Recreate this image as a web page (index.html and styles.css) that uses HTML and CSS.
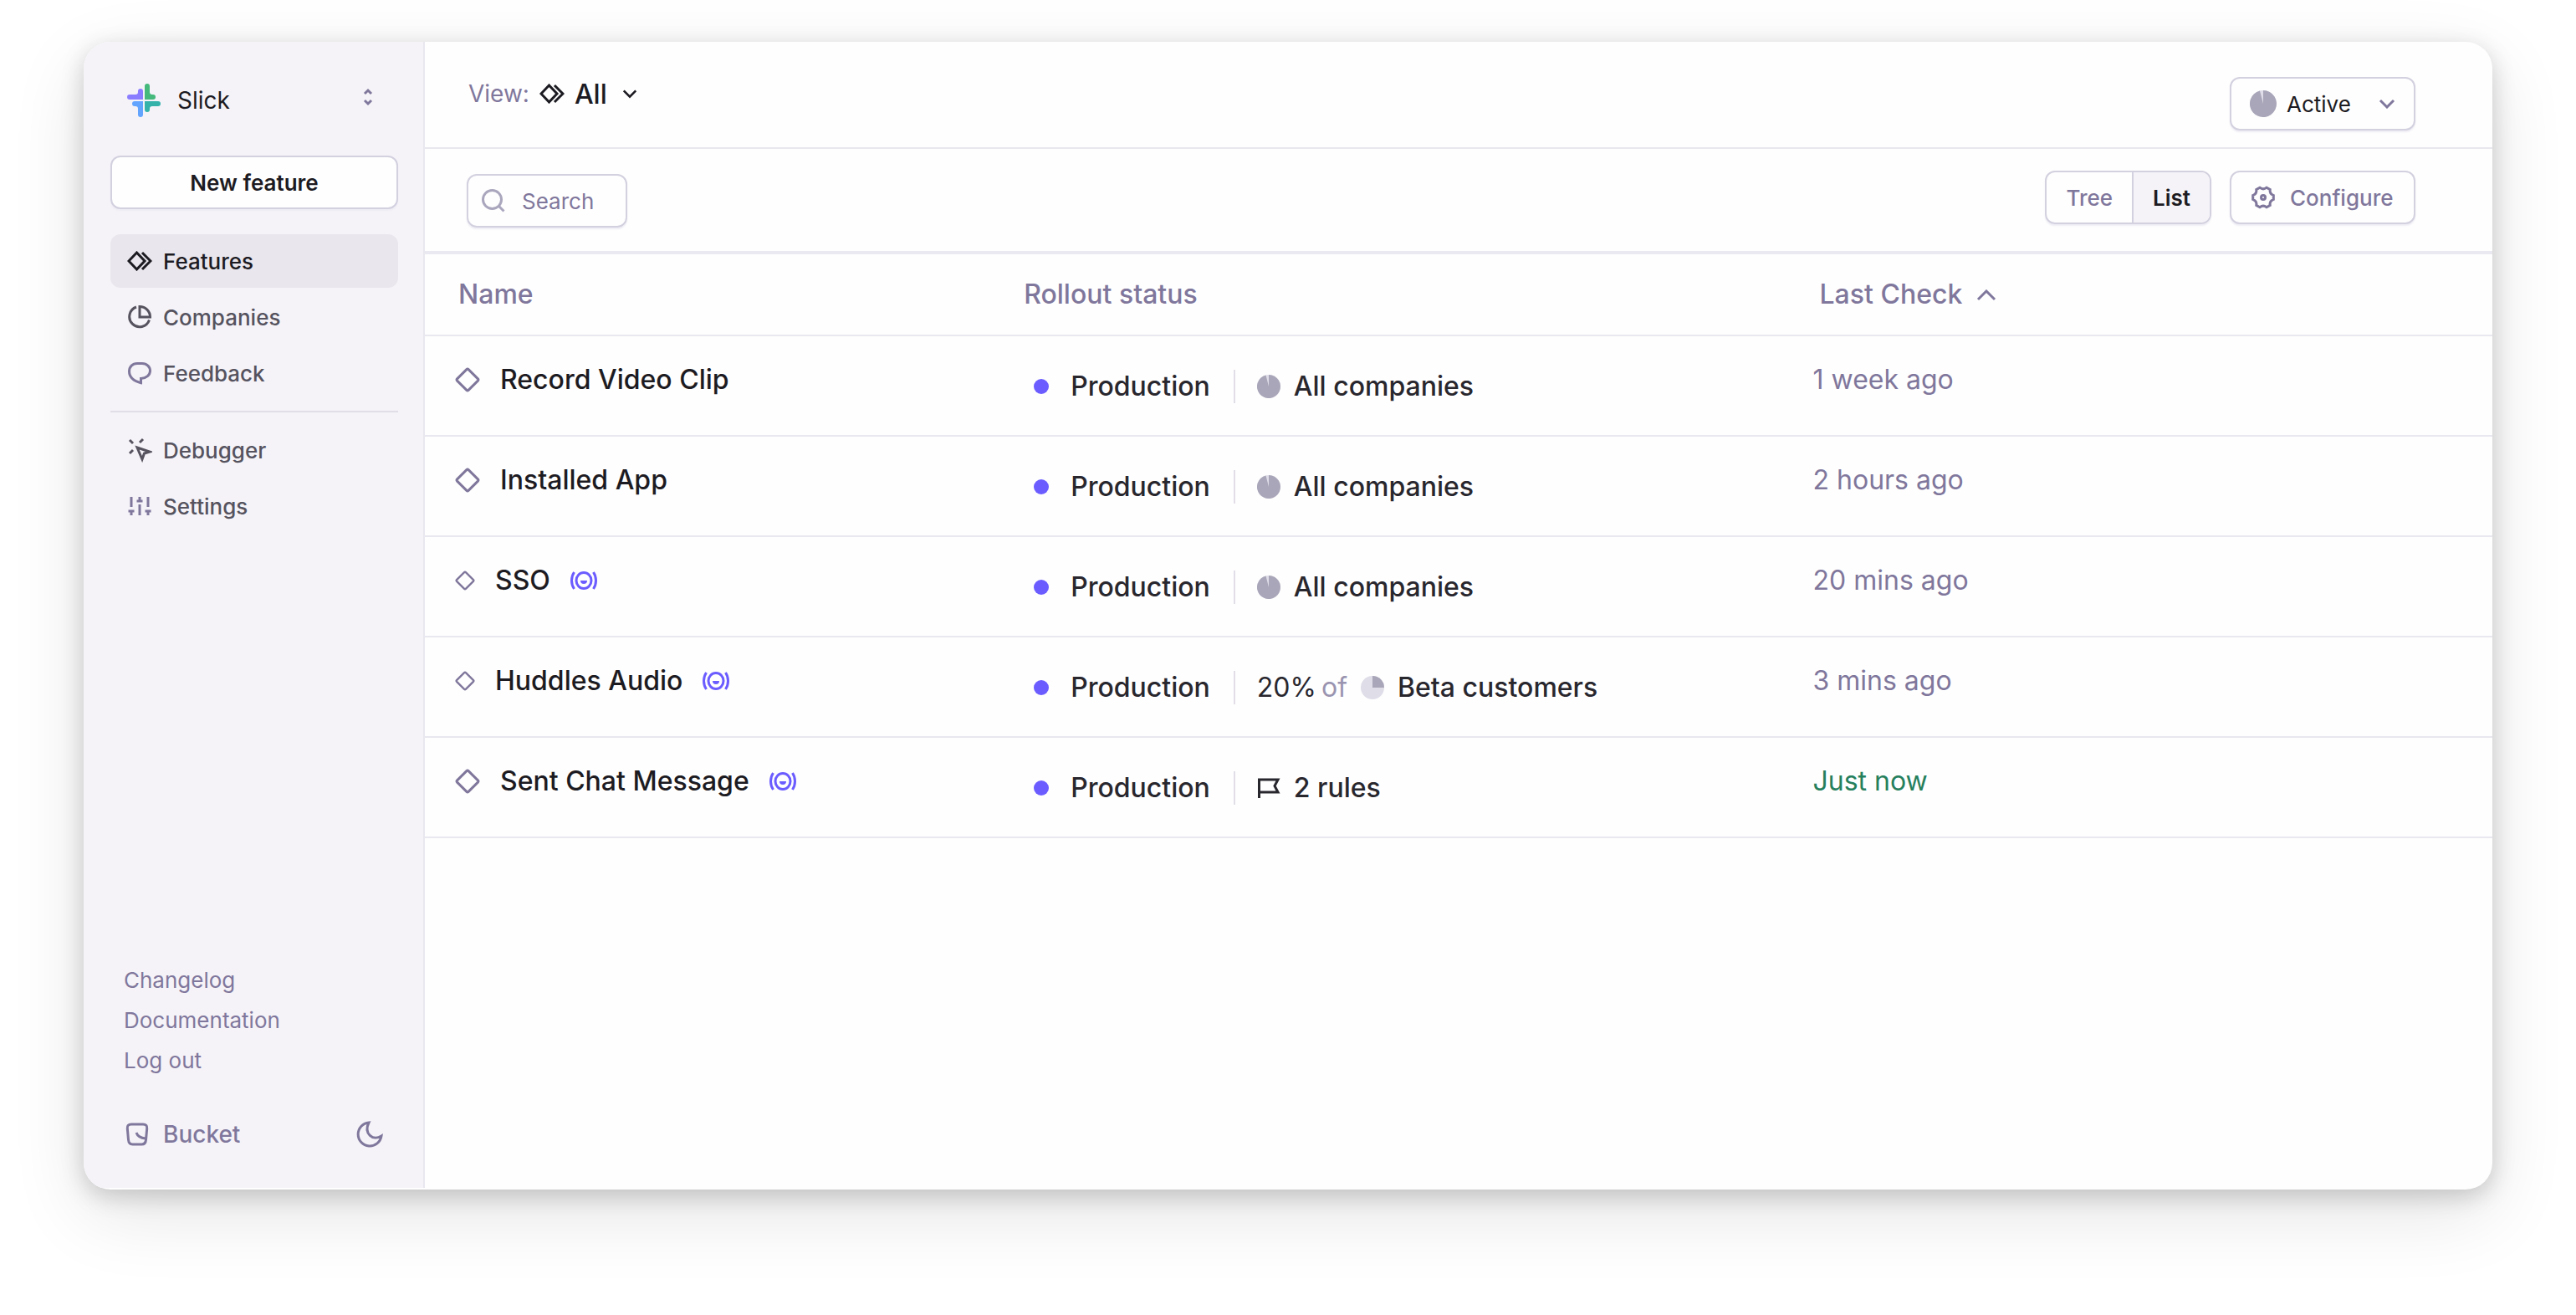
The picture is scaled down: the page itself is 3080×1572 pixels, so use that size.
FILE: index.html
```html
<!DOCTYPE html>
<html lang="en">
<head>
<meta charset="utf-8">
<title>Features</title>
<link rel="stylesheet" href="styles.css">
</head>

<body>
<svg class="sprite" width="0" height="0" aria-hidden="true">
	<symbol id="i-features" viewBox="0 0 30 24"><path d="M11.500 2 21 12l-9.500 10L2 12z"/><path d="M18 2l10 10-10 10"/></symbol>
	<symbol id="i-diamond" viewBox="0 0 30 30"><path d="M13.900 2.600 2.600 13.900a1.600 1.600 0 0 0 0 2.200l11.300 11.300a1.600 1.600 0 0 0 2.200 0l11.300-11.300a1.600 1.600 0 0 0 0-2.200L16.100 2.600a1.600 1.600 0 0 0-2.200 0z"/></symbol>
	<symbol id="i-live" viewBox="0 0 32 24"><ellipse cx="16" cy="12" rx="9" ry="9.500"/><path d="M4.500 2c-4 6-4 14 0 20M27.500 2c4 6 4 14 0 20"/><path class="solid" d="M12 12h8a4 4 0 0 1-8 0z"/></symbol>
	<symbol id="i-pie" viewBox="0 0 32 32"><circle class="pie-back" cx="16" cy="16" r="16"/><path class="pie-fill" d="M16 16V0A16 16 0 1 1 12 .5z"/></symbol>
	<symbol id="i-pie-quarter" viewBox="0 0 32 32"><circle class="pie-back" cx="16" cy="16" r="16"/><path class="pie-fill" d="M16 16V0a16 16 0 0 1 16 16z"/></symbol>
	<symbol id="i-down" viewBox="0 0 20 12"><path d="m2 2 8 8 8-8"/></symbol>
</svg>

<div class="window">
	<aside class="sidebar">
		<button class="workspace" type="button">
			<svg class="logo" viewBox="0 0 40 40">
				<path fill="#8b7dff" d="M13 9a3 3 0 0 1 6 0v10H3a3 3 0 0 1 0-6h7a3 3 0 0 0 3-3z"/>
				<path fill="#45b97c" d="M21 3a3 3 0 0 1 6 0v7a3 3 0 0 0 3 3h1a3 3 0 0 1 0 6H21z"/>
				<path fill="#63a4ff" d="M9 21h10v16a3 3 0 0 1-6 0v-7a3 3 0 0 0-3-3H9a3 3 0 0 1 0-6z"/>
				<path fill="#35b3ab" d="M21 21h16a3 3 0 0 1 0 6h-7a3 3 0 0 0-3 3v1a3 3 0 0 1-6 0z"/>
			</svg>
			<span>Slick</span>
			<svg class="icon updown" viewBox="0 0 12 32"><path d="m2 12 4-4 4 4M2 20l4 4 4-4"/></svg>
		</button>
		<button class="btn new-feature" type="button">New feature</button>
		<nav class="nav">
			<a class="active" href="#"><svg class="icon" width="30" height="24"><use href="#i-features"/></svg>Features</a>
			<a href="#"><svg class="icon" width="30" height="30" viewBox="0 0 30 30"><path d="M11 3a12.200 12.200 0 1 0 15.500 15.500"/><path d="M15 2.500V15h12.500A12.500 12.500 0 0 0 15 2.500z"/></svg>Companies</a>
			<a href="#"><svg class="icon muted" width="30" height="30" viewBox="0 0 30 30"><path d="M12 3.500h6c5.500 0 9.500 4 9.500 8.800 0 5-4.500 9-11 9.200v5.200C7.500 24.500 2.500 19.500 2.500 12.800c0-5.300 4-9.300 9.500-9.300z"/></svg>Feedback</a>
			<hr>
			<a href="#"><svg class="icon" width="30" height="30" viewBox="0 0 30 30"><path d="m3 3 4 4M19 2l-4 4M7 15l-4 4M12 12l15 5-6.500 2L18 26z"/></svg>Debugger</a>
			<a href="#"><svg class="icon muted" width="30" height="26" viewBox="0 0 30 26"><path d="M5 2v12M5 18v6M1.500 19h7M15 2v4M11.500 7h7M15 11v13M25 2v12M25 18v6M21.500 19h7"/></svg>Settings</a>
		</nav>
		<div class="links">
			<a href="#">Changelog</a>
			<a href="#">Documentation</a>
			<a href="#">Log out</a>
		</div>
		<div class="brand">
			<svg class="icon" width="28" height="28" viewBox="0 0 28 28"><path d="M7 2h14c3.500 0 5 1.800 4.700 5l-1.200 13.500c-.3 3.800-1.700 5.500-5 5.500h-11c-3.300 0-4.700-1.700-5-5.500L2.300 7C2 3.800 3.500 2 7 2z"/><path d="M13 12c1.500 4.500 5.500 6.500 11 7"/></svg>
			<span>Bucket</span>
			<button class="theme" type="button" aria-label="Dark mode"><svg class="icon" width="32" height="32" viewBox="0 0 32 32"><path d="M15 2A14 14 0 1 0 30 18C20 24.500 8.500 15 15 2z"/></svg></button>
		</div>
	</aside>

	<main class="main">
		<header class="topbar">
			<button class="view" type="button">
				<span class="label">View:</span>
				<svg class="icon" width="30" height="24"><use href="#i-features"/></svg>
				<span class="value">All</span>
				<svg class="icon" width="18" height="12"><use href="#i-down"/></svg>
			</button>
			<button class="btn status" type="button">
				<svg width="32" height="32"><use href="#i-pie"/></svg>
				<span>Active</span>
				<svg class="icon muted" width="20" height="12"><use href="#i-down"/></svg>
			</button>
		</header>
		<div class="toolbar">
			<label class="search">
				<svg class="icon" width="28" height="28" viewBox="0 0 28 28"><circle cx="12.500" cy="12.500" r="11"/><path d="m20.500 20.500 6 6"/></svg>
				<input type="text" placeholder="Search" aria-label="Search">
			</label>
			<div class="tabs">
				<button type="button">Tree</button>
				<button class="selected" type="button">List</button>
			</div>
			<button class="btn configure" type="button">
				<svg class="icon" width="28" height="28" viewBox="0 0 28 28"><path d="M26.300 16.400Q21.400 18.300 22.200 23.400L18.100 25.800Q14 22.500 9.900 25.800L5.800 23.400Q6.600 18.300 1.700 16.400V11.600Q6.600 9.700 5.800 4.600L9.900 2.200Q14 5.500 18.100 2.200L22.200 4.600Q21.400 9.700 26.300 11.600z"/><circle cx="14" cy="14" r="2.500"/></svg>
				Configure
			</button>
		</div>
		<table class="features">
			<colgroup><col class="c-name"><col class="c-rollout"><col></colgroup>
			<thead>
				<tr>
					<th>Name</th>
					<th>Rollout status</th>
					<th>Last Check <svg class="icon sort" width="24" height="16" viewBox="0 0 24 16"><path d="m2 12 10-10 10 10"/></svg></th>
				</tr>
			</thead>
			<tbody>
				<tr>
					<td><div class="name"><svg class="icon" width="30" height="30"><use href="#i-diamond"/></svg>Record Video Clip</div></td>
					<td><div class="rollout"><i class="dot"></i>Production<div class="rule"><svg width="28" height="28"><use href="#i-pie"/></svg>All companies</div></div></td>
					<td>1 week ago</td>
				</tr>
				<tr>
					<td><div class="name"><svg class="icon" width="30" height="30"><use href="#i-diamond"/></svg>Installed App</div></td>
					<td><div class="rollout"><i class="dot"></i>Production<div class="rule"><svg width="28" height="28"><use href="#i-pie"/></svg>All companies</div></div></td>
					<td>2 hours ago</td>
				</tr>
				<tr>
					<td><div class="name"><svg class="icon" width="24" height="24"><use href="#i-diamond"/></svg>SSO<svg class="icon live" width="32" height="24"><use href="#i-live"/></svg></div></td>
					<td><div class="rollout"><i class="dot"></i>Production<div class="rule"><svg width="28" height="28"><use href="#i-pie"/></svg>All companies</div></div></td>
					<td>20 mins ago</td>
				</tr>
				<tr>
					<td><div class="name"><svg class="icon" width="24" height="24"><use href="#i-diamond"/></svg>Huddles Audio<svg class="icon live" width="32" height="24"><use href="#i-live"/></svg></div></td>
					<td><div class="rollout"><i class="dot"></i>Production<div class="rule"><span class="share">20% <em>of</em></span><svg width="28" height="28"><use href="#i-pie-quarter"/></svg>Beta customers</div></div></td>
					<td>3 mins ago</td>
				</tr>
				<tr>
					<td><div class="name"><svg class="icon" width="30" height="30"><use href="#i-diamond"/></svg>Sent Chat Message<svg class="icon live" width="32" height="24"><use href="#i-live"/></svg></div></td>
					<td><div class="rollout"><i class="dot"></i>Production<div class="rule"><svg class="icon" width="28" height="28" viewBox="0 0 28 28"><path d="M2.500 26V4H25l-4 7.500 4 7.500H3"/></svg>2 rules</div></div></td>
					<td class="now">Just now</td>
				</tr>
			</tbody>
		</table>
	</main>
</div>
</body>
</html>
```

FILE: styles.css
```css
*{
	box-sizing:border-box;
}
body{
	margin:0;
	padding:50px 100px 150px;
	min-height:100vh;
	display:flex;
	background:#fff;
	color:#1d1b22;
	font-family:Inter, "Liberation Sans", sans-serif;
	font-size:26px;
}
a{
	color:inherit;
	text-decoration:none;
}
button, input{
	font:inherit;
	color:inherit;
	background:none;
	border:0;
	padding:0;
	margin:0;
}
svg{
	flex:none;
	display:block;
}
.sprite{
	position:absolute;
}
.icon{
	fill:none;
	stroke:currentColor;
	stroke-width:3px;
}
.muted{
	color:#80779c;
}
.solid{
	fill:currentColor;
	stroke:none;
}
.pie-back{
	fill:#dfdde8;
}
.pie-fill{
	fill:#aaa6b9;
}
.window{
	flex:1;
	display:flex;
	overflow:hidden;
	padding-bottom:2px;
	border-radius:32px;
	background:#fefefe;
	box-shadow:0 8px 28px rgba(0,0,0,.18), 0 28px 90px rgba(0,0,0,.11);
}

/* sidebar */
.sidebar{
	flex:none;
	width:408px;
	display:flex;
	flex-direction:column;
	padding:50px 30px 44px 32px;
	border-right:2px solid #e9e7ef;
	background:#f5f3f8;
}
.workspace{
	display:flex;
	align-items:center;
	gap:20px;
	height:40px;
	padding:0 30px 0 20px;
	font-size:28px;
}
.logo{
	width:40px;
	height:40px;
}
.updown{
	align-self:flex-start;
	width:12px;
	height:32px;
	margin-left:auto;
	color:#80779c;
}
.btn{
	display:flex;
	align-items:center;
	height:64px;
	border:2px solid #d3d0df;
	border-radius:12px;
	background:#fefefe;
	box-shadow:0 2px 2px #eeecf4;
}
.new-feature{
	justify-content:center;
	margin:46px 0 30px;
	font-weight:600;
}
.nav{
	display:flex;
	flex-direction:column;
	gap:3px;
}
.nav a{
	display:flex;
	align-items:center;
	gap:13px;
	height:64px;
	padding-left:20px;
	border-radius:12px;
	color:#56535f;
	font-weight:500;
}
.nav .active{
	background:#e9e6ed;
	color:#1d1b22;
}
.nav hr{
	width:100%;
	height:2px;
	margin:10px 0;
	border:0;
	background:#e1dee8;
}
.links{
	display:flex;
	flex-direction:column;
	margin-top:auto;
	padding-left:16px;
	color:#80779c;
	line-height:48px;
}
.brand{
	display:flex;
	align-items:center;
	gap:17px;
	height:40px;
	margin-top:44px;
	padding:0 18px;
	color:#80779c;
	font-size:28px;
	font-weight:500;
}
.theme{
	margin-left:auto;
}

/* top bars */
.main{
	flex:1;
	min-width:0;
}
.topbar{
	display:flex;
	align-items:flex-start;
	justify-content:space-between;
	height:128px;
	padding:42px 92px 0 52px;
	border-bottom:2px solid #e9e7ef;
}
.view{
	display:flex;
	align-items:center;
	height:40px;
	font-size:28px;
}
.view .label{
	margin-right:12px;
	color:#80779c;
}
.view .value{
	margin:0 18px 0 12px;
	font-size:32px;
	font-weight:500;
}
.status{
	width:222px;
	padding:0 22px;
	gap:12px;
}
.status .muted{
	margin-left:auto;
}
.toolbar{
	display:flex;
	align-items:flex-start;
	gap:22px;
	height:126px;
	padding:26px 92px 28px 50px;
	border-bottom:4px solid #eae8f0;
}
.search{
	display:flex;
	align-items:center;
	align-self:flex-end;
	gap:20px;
	width:192px;
	height:64px;
	margin-right:auto;
	padding:0 16px;
	border:2px solid #d3d0df;
	border-radius:12px;
	box-shadow:0 2px 2px #eeecf4;
	color:#aaa6bd;
}
.search input{
	width:100%;
	min-width:0;
}
.search input::placeholder{
	color:#80779c;
	opacity:1;
}
.tabs{
	display:flex;
	height:64px;
	overflow:hidden;
	border:2px solid #d3d0df;
	border-radius:12px;
	box-shadow:0 2px 2px #eeecf4;
	color:#80779c;
	font-weight:500;
}
.tabs button{
	padding:0 23px;
}
.tabs .selected{
	border-left:2px solid #d3d0df;
	background:#f5f3f8;
	color:#1d1b22;
	font-weight:600;
}
.configure{
	gap:18px;
	width:222px;
	padding:0 24px;
	color:#80779c;
	font-weight:500;
}

/* table */
.features{
	width:100%;
	table-layout:fixed;
	border-spacing:0;
	font-size:32px;
	line-height:40px;
}
.c-name{
	width:28%;
}
.c-rollout{
	width:38%;
}
.features th{
	height:98px;
	padding:0 0 0 40px;
	border-bottom:2px solid #e9e7ef;
	color:#80779c;
	font-weight:500;
	text-align:left;
}
.features th:nth-child(2){
	padding-left:24px;
}
.features th:nth-child(3){
	padding-left:36px;
}
.sort{
	display:inline-block;
	margin-left:8px;
	vertical-align:middle;
}
.features td{
	height:120px;
	padding:0 0 14px 36px;
	border-bottom:2px solid #e9e7ef;
}
.features td:nth-child(2){
	padding-top:2px;
	padding-bottom:0;
}
.features td:nth-child(3){
	padding-left:28px;
	color:#80779c;
}
.features td.now:nth-child(3){
	color:#26805d;
}
.name, .rollout, .rule{
	display:flex;
	align-items:center;
	font-weight:500;
}
.name{
	gap:24px;
}
.name .icon{
	color:#80779c;
}
.name .live{
	color:#6b5cff;
}
.rollout{
	color:#29272e;
}
.dot{
	width:18px;
	height:18px;
	margin-right:26px;
	border-radius:50%;
	background:#6b5cff;
}
.rule{
	gap:16px;
	margin-left:28px;
	padding-left:26px;
	border-left:2px solid #e1dee8;
}
.share{
	display:flex;
	gap:6px;
	font-weight:400;
}
.share em{
	color:#9a94b0;
	font-style:normal;
}
```
